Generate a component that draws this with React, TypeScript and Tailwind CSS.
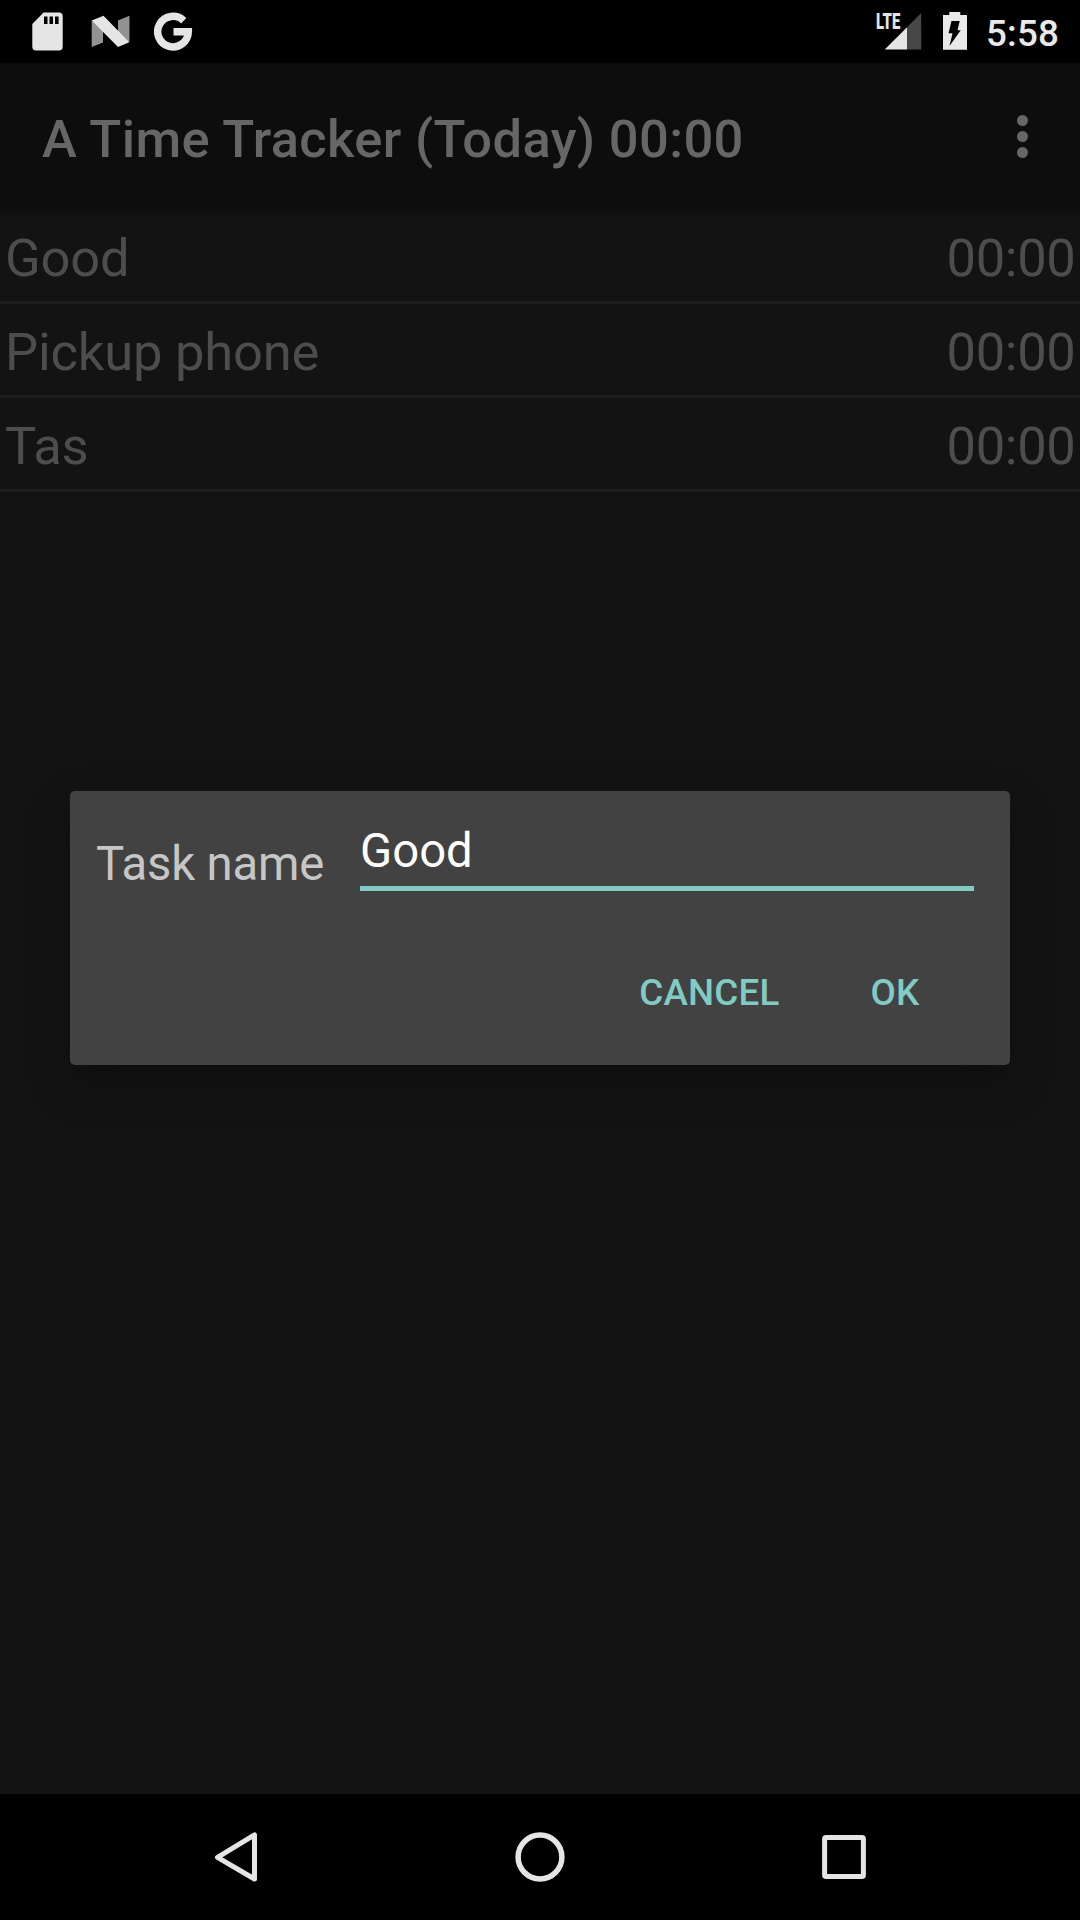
const tasks = [
  { name: "Good", time: "00:00" },
  { name: "Pickup phone", time: "00:00" },
  { name: "Tas", time: "00:00" },
];

function SdCardIcon() {
  return (
    <svg className="ml-8 h-[63px] w-8" viewBox="32 0 32 63" fill="#e5e5e5">
      <path
        fillRule="evenodd"
        d="M43.500 12.500H59a3.700 3.700 0 0 1 3.700 3.700V46.800a3.700 3.700 0 0 1-3.700 3.700H36a3.700 3.700 0 0 1-3.700-3.700V24zM44 16.500V24h3.500v-7.500zM49.500 16.500V24H53v-7.500zM55 16.500V24h3.600v-7.500z"
      />
    </svg>
  );
}

function NougatIcon() {
  return (
    <svg className="ml-[27px] h-[63px] w-10" viewBox="91 0 40 63">
      <path fill="#929292" d="M91.700 20.500L103 30V42.500L91.700 47zM118 20.500L129.500 15.700V42L118 36z" />
      <path fill="#e5e5e5" d="M91.700 20.500L103.500 15.700L129.300 42.300L118 47z" />
    </svg>
  );
}

function GoogleIcon() {
  return (
    <svg className="ml-[23px] h-[63px] w-10" viewBox="154 0 40 63" fill="none" stroke="#e5e5e5" strokeWidth="7.500">
      <path d="M183.700 20.700A15.300 15.300 0 1 0 188.300 31.800H173.500" />
    </svg>
  );
}

function SignalIcon() {
  return (
    <div className="relative h-[63px] w-[46px]">
      <svg className="h-[63px] w-[46px]" viewBox="876 0 46 63">
        <path fill="#e5e5e5" d="M884.700 49.500L907 27.200V49.500z" />
        <path fill="#474747" d="M907 27.200L921.200 13V49.500H907z" />
      </svg>
      <span className="absolute left-0 top-[8px] origin-left scale-x-[0.66] text-[22.500px] font-black leading-[27px] text-[#e5e5e5]">
        LTE
      </span>
    </div>
  );
}

function BatteryIcon() {
  return (
    <svg className="ml-5 h-[63px] w-[26px]" viewBox="942 0 26 63">
      <path fill="#e9e9e9" d="M943 15h6.300v-2.900h11V15H967v34.800h-24z" />
      <path fill="#000" d="M951.500 21h8.200l-2.200 9.200h3.200L949.500 46l3-12.700h-4z" />
    </svg>
  );
}

function StatusBar() {
  return (
    <header className="flex h-[63px] items-center bg-black">
      <SdCardIcon />
      <NougatIcon />
      <GoogleIcon />
      <div className="ml-auto flex items-center pr-[22px]">
        <SignalIcon />
        <BatteryIcon />
        <span className="ml-[18px] w-[72px] whitespace-nowrap pt-[5px] text-[36.750px] font-medium leading-[58px] tracking-[0.200px] text-[#e9e9e9]">
          5:58
        </span>
      </div>
    </header>
  );
}

function ActionBar() {
  return (
    <div className="relative flex h-[147px] items-center justify-between bg-[#0d0d0d] pl-[42px] pr-[52px] shadow-[0_2px_8px_rgba(0,0,0,0.300)]">
      <h1 className="pt-[5px] text-[52.500px] font-medium leading-[62px] tracking-[0.350px] text-[#666666]">
        A Time Tracker (Today) 00:00
      </h1>
      <div className="flex flex-col gap-[5px]">
        <i className="size-[11px] rounded-full bg-[#666666]" />
        <i className="size-[11px] rounded-full bg-[#666666]" />
        <i className="size-[11px] rounded-full bg-[#666666]" />
      </div>
    </div>
  );
}

function TaskDialog() {
  return (
    <div className="absolute left-[70px] top-[791px] flex h-[274px] w-[940px] flex-col rounded-[5px] bg-[#424242] shadow-[0_18px_46px_rgba(0,0,0,0.280)]">
      <div className="flex items-start pl-[26px] pr-9">
        <label className="w-[264px] whitespace-nowrap pt-[45px] text-[47.250px] leading-[56px] tracking-[-0.150px] text-[#c6c6c6]">
          Task name
        </label>
        <div className="h-[100px] flex-1 border-b-[5px] border-[#80cbc4] pt-8 text-[47.250px] leading-[56px] text-white">
          Good
        </div>
      </div>
      <div className="mt-[79px] flex justify-end gap-[91px] pr-[90.500px] text-[36.750px] font-medium leading-[44px] tracking-[0.200px] text-[#80cbc4]">
        <button>CANCEL</button>
        <button>OK</button>
      </div>
    </div>
  );
}

function NavigationBar() {
  return (
    <nav className="flex h-[126px] items-center justify-between bg-black pl-[211px] pr-[210px]">
      <svg className="h-[126px] w-12" viewBox="211 1794 48 126" fill="none" stroke="#e5e5e5" strokeWidth="5" strokeLinejoin="round">
        <path d="M217.500 1857.300L254.500 1834.800V1879z" />
      </svg>
      <svg className="h-[126px] w-[51px]" viewBox="515 1794 51 126" fill="none" stroke="#e5e5e5" strokeWidth="5.500">
        <circle cx="540" cy="1857" r="21.900" />
      </svg>
      <svg className="h-[126px] w-12" viewBox="822 1794 48 126" fill="none" stroke="#e5e5e5" strokeWidth="5">
        <rect x="824.600" y="1837.600" width="38.800" height="38.800" rx="1.500" />
      </svg>
    </nav>
  );
}

export default function App() {
  return (
    <div className="relative flex h-[1920px] w-[1080px] flex-col overflow-hidden bg-[#131313] font-['Roboto',sans-serif]">
      <StatusBar />
      <ActionBar />
      <main className="flex-1">
        {tasks.map((task) => (
          <div
            key={task.name}
            className="flex h-[94px] items-center justify-between border-b-[3px] border-[#1e1e1e] pl-[5px] pr-[4.500px] pt-[5px] text-[52.500px] leading-[62px] tracking-[-0.200px] text-[#4d4d4d]"
          >
            <span>{task.name}</span>
            <span className="tracking-[-0.350px]">{task.time}</span>
          </div>
        ))}
      </main>
      <NavigationBar />
      <TaskDialog />
    </div>
  );
}
